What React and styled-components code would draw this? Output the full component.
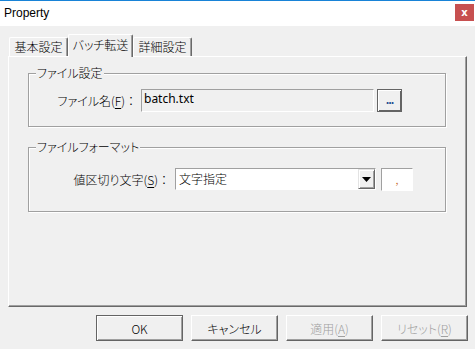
import React from 'react';
import styled, { createGlobalStyle } from 'styled-components';

const GlobalStyle = createGlobalStyle`
  html, body {
    margin: 0;
    padding: 0;
    background: #f0f0f0;
  }
  * {
    box-sizing: border-box;
  }
`;

const uiFont = `"Noto Sans CJK JP", "Noto Sans", sans-serif`;

function App() {
  return (
    <>
      <GlobalStyle />
      <Window>
        <TitleBar>
          <Title>Property</Title>
          <CloseButton>x</CloseButton>
        </TitleBar>
        <Body>
          <TabStrip>
            <Tab $width={59}>基本設定</Tab>
            <Tab $width={65} $active>バッチ転送</Tab>
            <Tab $width={59}>詳細設定</Tab>
          </TabStrip>
          <Panel>
            <Group $height={54} $padTop={15}>
              <Legend>ファイル設定</Legend>
              <Row>
                <Label $width={108}>ファイル名(<u>F</u>)<Colon>：</Colon></Label>
                <TextField>batch.txt</TextField>
                <BrowseButton>...</BrowseButton>
              </Row>
            </Group>
            <Group $height={65} $padTop={20}>
              <Legend>ファイルフォーマット</Legend>
              <Row>
                <Label $width={141}>値区切り文字(<u>S</u>)<Colon>：</Colon></Label>
                <Combo>
                  <ComboText>文字指定</ComboText>
                  <DropButton>
                    <svg width="9" height="5" viewBox="0 0 9 5">
                      <path d="M0 0H9L4.5 5Z" fill="#000" />
                    </svg>
                  </DropButton>
                </Combo>
                <SmallField>,</SmallField>
              </Row>
            </Group>
          </Panel>
          <ButtonRow>
            <PushButton $default>OK</PushButton>
            <PushButton>キャンセル</PushButton>
            <PushButton $disabled>適用(<u>A</u>)</PushButton>
            <PushButton $disabled>リセット(<u>R</u>)</PushButton>
          </ButtonRow>
        </Body>
      </Window>
    </>
  );
}

export default App;

const Window = styled.div`
  width: 475px;
  height: 349px;
  display: flex;
  flex-direction: column;
  background: #f0f0f0;
  font-family: ${uiFont};
  font-size: 12px;
  font-weight: 300;
  font-feature-settings: "palt";
  color: #000;
  overflow: hidden;
`;

const TitleBar = styled.div`
  height: 26px;
  flex: none;
  display: flex;
  align-items: center;
  justify-content: space-between;
  background: #fff;
  border-top: 1px solid #1883d7;
  padding: 0 1px 1px 4px;
`;

const Title = styled.span`
  font-family: "Liberation Sans", Arial, sans-serif;
  font-size: 12px;
  font-weight: 400;
  color: #000;
`;

const CloseButton = styled.div`
  width: 19px;
  height: 17px;
  margin-top: -2px;
  background: #c75050;
  color: #fff;
  font-family: "DejaVu Sans", sans-serif;
  font-weight: bold;
  font-size: 10px;
  display: flex;
  align-items: center;
  justify-content: center;
`;

const Body = styled.div`
  flex: 1;
  display: flex;
  flex-direction: column;
  padding: 8px 7px 0 8px;
`;

const TabStrip = styled.div`
  display: flex;
  align-items: flex-end;
  height: 22px;
  padding-left: 1px;
  position: relative;
  z-index: 1;
`;

const Tab = styled.div`
  width: ${p => p.$width}px;
  height: ${p => (p.$active ? '23px' : '19px')};
  margin-bottom: ${p => (p.$active ? '-1px' : '0')};
  padding-bottom: ${p => (p.$active ? '2px' : '0')};
  display: flex;
  align-items: center;
  justify-content: center;
  background: #f0f0f0;
  border-top: 1px solid #fff;
  border-left: 1px solid #fff;
  border-right: 1px solid #696969;
  box-shadow: inset -1px 0 0 #a0a0a0;
  border-radius: 2px 2px 0 0;
  line-height: 1;
  white-space: nowrap;
`;

const Panel = styled.div`
  height: 251px;
  margin-right: 1px;
  display: flex;
  flex-direction: column;
  gap: 20px;
  padding: 16px 20px 0 19px;
  border-top: 1px solid #fff;
  border-left: 1px solid #fff;
  border-right: 1px solid #696969;
  border-bottom: 1px solid #696969;
  box-shadow: inset -1px -1px 0 #a0a0a0;
`;

const Group = styled.div`
  position: relative;
  height: ${p => p.$height}px;
  padding-top: ${p => p.$padTop}px;
  border: 1px solid #a0a0a0;
  box-shadow: inset 1px 1px 0 #fff, 1px 1px 0 #fff;
`;

const Legend = styled.span`
  position: absolute;
  top: -9px;
  left: 7px;
  padding: 0 1px;
  background: #f0f0f0;
  line-height: 16px;
  white-space: nowrap;
`;

const Row = styled.div`
  display: flex;
  align-items: flex-start;
`;

const Label = styled.div`
  width: ${p => p.$width}px;
  text-align: right;
  line-height: 23px;
  white-space: nowrap;
  flex: none;

  u {
    text-underline-offset: 2px;
  }
`;

const Colon = styled.span`
  font-feature-settings: normal;
`;

const sunken = `
  border-top: 1px solid #a0a0a0;
  border-left: 1px solid #a0a0a0;
  border-right: 1px solid #fff;
  border-bottom: 1px solid #fff;
`;

const TextField = styled.div`
  ${sunken}
  width: 233px;
  height: 23px;
  margin-left: 4px;
  padding: 0 2px;
  line-height: 18px;
  background: #f0f0f0;
  font-family: "Noto Sans", sans-serif;
  font-weight: 400;
`;

const BrowseButton = styled.div`
  width: 25px;
  height: 23px;
  margin-left: 3px;
  display: flex;
  align-items: center;
  justify-content: center;
  border: 1px solid #646464;
  box-shadow: inset 1px 1px 0 #fff, inset -1px -1px 0 #646464;
  background: #f0f0f0;
  font-size: 11px;
  font-weight: bold;
  padding-bottom: 4px;
  letter-spacing: -1px;
  color: #1b4c8f;
`;

const Combo = styled.div`
  ${sunken}
  width: 201px;
  height: 22px;
  margin-left: 5px;
  display: flex;
  background: #fff;
`;

const ComboText = styled.div`
  flex: 1;
  padding-left: 3px;
  line-height: 20px;
`;

const DropButton = styled.div`
  width: 17px;
  height: 20px;
  display: flex;
  align-items: center;
  justify-content: center;
  background: #f0f0f0;
  border: 1px solid #e3e3e3;
  border-right-color: #696969;
  border-bottom-color: #696969;
  box-shadow: inset 1px 1px 0 #fff, inset -1px -1px 0 #a0a0a0;
`;

const SmallField = styled.div`
  ${sunken}
  width: 32px;
  height: 23px;
  margin-left: 5px;
  background: #fff;
  text-align: center;
  line-height: 20px;
  color: #c4621b;
`;

const ButtonRow = styled.div`
  display: flex;
  justify-content: flex-end;
  gap: 8px;
  margin-top: 8px;
`;

const PushButton = styled.div`
  width: 87px;
  height: 26px;
  display: flex;
  align-items: center;
  justify-content: center;
  background: #f0f0f0;
  color: ${p => (p.$disabled ? '#a0a0a0' : '#000')};
  border: 1px solid ${p => (p.$default ? '#646464' : '#fff')};
  border-right-color: #646464;
  border-bottom-color: #646464;
  box-shadow: ${p =>
    p.$default
      ? 'inset 1px 1px 0 #fff, inset -1px -1px 0 #a0a0a0'
      : 'inset -1px -1px 0 #a0a0a0'};
  white-space: nowrap;

  u {
    text-underline-offset: 2px;
  }
`;
